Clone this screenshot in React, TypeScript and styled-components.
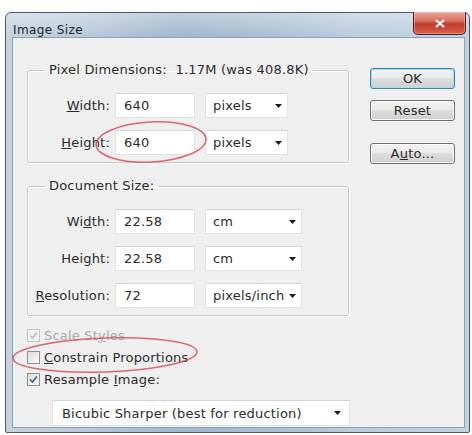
import styled, { createGlobalStyle } from 'styled-components';

const GlobalStyle = createGlobalStyle`
  html, body {
    margin: 0;
    padding: 0;
    background: #ffffff;
  }
  body {
    font-family: "DejaVu Sans", "Liberation Sans", sans-serif;
    font-size: 13px;
    letter-spacing: 0.2px;
    color: #2b2b2b;
  }
`;

type SelectProps = { width: number; value: string };

function Select({ width, value }: SelectProps) {
  return (
    <SelectBox $w={width}>
      <span>{value}</span>
      <svg width="7" height="4" viewBox="0 0 7 4">
        <path d="M0 0 H7 L3.5 4 Z" fill="#1a1a1a" />
      </svg>
    </SelectBox>
  );
}

type CheckProps = { label: React.ReactNode; checked?: boolean; disabled?: boolean };

function Check({ label, checked, disabled }: CheckProps) {
  return (
    <CheckRow $disabled={disabled}>
      <Box $disabled={disabled}>
        {checked && (
          <svg width="9" height="9" viewBox="0 0 9 9">
            <path
              d="M1 4.5 L3.5 7 L8 1.5"
              fill="none"
              stroke={disabled ? '#b8b8b8' : '#3a5a8c'}
              strokeWidth="1.6"
            />
          </svg>
        )}
      </Box>
      <span>{label}</span>
    </CheckRow>
  );
}

export default function App() {
  return (
    <>
      <GlobalStyle />
      <Page>
        <Window>
          <TitleBar>
            <Title>Image Size</Title>
            <CloseButton>
              <svg width="10" height="9" viewBox="0 0 10 9">
                <path d="M1 1 L9 8 M9 1 L1 8" stroke="#ffffff" strokeWidth="2.2" />
              </svg>
            </CloseButton>
          </TitleBar>
          <Client>
            <LeftColumn>
              <Group>
                <Legend>Pixel Dimensions:  1.17M (was 408.8K)</Legend>
                <FieldRow>
                  <Label><u>W</u>idth:</Label>
                  <Input>640</Input>
                  <Select width={83} value="pixels" />
                </FieldRow>
                <FieldRow>
                  <Label><u>H</u>eight:</Label>
                  <Input>640</Input>
                  <Select width={83} value="pixels" />
                </FieldRow>
              </Group>

              <Group $spaced>
                <Legend>Document Size:</Legend>
                <FieldRow>
                  <Label>Wi<u>d</u>th:</Label>
                  <Input>22.58</Input>
                  <Select width={97} value="cm" />
                </FieldRow>
                <FieldRow>
                  <Label>Hei<u>g</u>ht:</Label>
                  <Input>22.58</Input>
                  <Select width={97} value="cm" />
                </FieldRow>
                <FieldRow>
                  <Label><u>R</u>esolution:</Label>
                  <Input>72</Input>
                  <Select width={97} value="pixels/inch" />
                </FieldRow>
              </Group>

              <Checks>
                <Check label={<>Scale St<u>y</u>les</>} checked disabled />
                <Check label={<><u>C</u>onstrain Proportions</>} />
                <Check label={<>Resample <u>I</u>mage:</>} checked />
              </Checks>

              <ResampleSelect>
                <span>Bicubic Sharper (best for reduction)</span>
                <svg width="7" height="4" viewBox="0 0 7 4">
                  <path d="M0 0 H7 L3.5 4 Z" fill="#1a1a1a" />
                </svg>
              </ResampleSelect>
            </LeftColumn>

            <RightColumn>
              <ButtonGroup>
                <Button $default>OK</Button>
                <Button>Reset</Button>
              </ButtonGroup>
              <Button>A<u>u</u>to...</Button>
            </RightColumn>
          </Client>
        </Window>

        {/* hand-drawn red marks over the dialog */}
        <Marks width="472" height="435" viewBox="0 0 472 435">
          <ellipse cx="151" cy="142" rx="55" ry="20" transform="rotate(-3 151 142)" />
          <ellipse cx="105" cy="355" rx="92" ry="17" transform="rotate(-2 105 355)" />
        </Marks>
      </Page>
    </>
  );
}

const Page = styled.div`
  position: relative;
  width: 472px;
  height: 435px;
  box-sizing: border-box;
  padding: 12px 2px 2px 5px;
`;

const Window = styled.div`
  display: flex;
  flex-direction: column;
  height: 100%;
  box-sizing: border-box;
  border: 1px solid #4b5968;
  border-radius: 6px 6px 2px 2px;
  background:
    linear-gradient(180deg, rgba(255, 255, 255, 0.35) 0px, rgba(255, 255, 255, 0) 24px),
    linear-gradient(90deg, #c6d2dd 0%, #b7c8d9 18%, #9fb6cd 38%, #a9bed2 55%, #b9cbdc 75%, #c2d2e1 100%);
`;

const TitleBar = styled.div`
  display: flex;
  justify-content: space-between;
  align-items: flex-start;
  height: 24px;
  padding-left: 7px;
`;

const Title = styled.div`
  padding-top: 10px;
  font-size: 12px;
  letter-spacing: 0.4px;
  color: #1c2530;
`;

const CloseButton = styled.div`
  display: flex;
  align-items: center;
  justify-content: center;
  width: 53px;
  height: 23px;
  margin-top: -1px;
  margin-right: 3px;
  box-sizing: border-box;
  border: 1px solid #4a2020;
  border-top: none;
  border-radius: 0 0 5px 5px;
  background: linear-gradient(180deg, #e9a99b 0%, #d9705f 40%, #c23b28 55%, #d5624d 100%);
  box-shadow: inset 0 0 0 1px rgba(255, 200, 190, 0.45);
`;

const Client = styled.div`
  flex: 1;
  display: flex;
  gap: 21px;
  margin: 0 4px 4px 6px;
  padding: 0 10px 0 14px;
  border: 1px solid #8ea1b4;
  background: #efefef;
`;

const LeftColumn = styled.div`
  display: flex;
  flex-direction: column;
  width: 322px;
  padding-top: 25px;
`;

const Group = styled.fieldset<{ $spaced?: boolean }>`
  display: flex;
  flex-direction: column;
  gap: 12px;
  margin: ${(p) => (p.$spaced ? '16px' : '0')} 0 0 0;
  padding: 16px 8px 7px 6px;
  border: 1px solid #c9c9c9;
  border-radius: 3px;
  box-shadow: inset 1px 1px 0 #ffffff, 1px 1px 0 #ffffff;
`;

const Legend = styled.legend`
  margin-left: 11px;
  padding: 0 4px;
  line-height: 14px;
  white-space: pre;
  color: #2b2b2b;
`;

const FieldRow = styled.div`
  display: flex;
  align-items: center;
  height: 25px;
`;

const Label = styled.div`
  width: 76px;
  margin-right: 5px;
  text-align: right;
  white-space: nowrap;
`;

const Input = styled.div`
  width: 80px;
  height: 25px;
  box-sizing: border-box;
  margin-right: 10px;
  padding: 0 8px;
  display: flex;
  align-items: center;
  background: #ffffff;
  border: 1px solid #e2e2e2;
  border-top-color: #d4d4d4;
`;

const SelectBox = styled.div<{ $w: number }>`
  width: ${(p) => p.$w}px;
  height: 25px;
  box-sizing: border-box;
  padding: 0 5px 0 7px;
  display: flex;
  align-items: center;
  justify-content: space-between;
  background: #ffffff;
  border: 1px solid #e2e2e2;
  border-top-color: #d4d4d4;
  white-space: nowrap;
`;

const Checks = styled.div`
  display: flex;
  flex-direction: column;
  margin-top: 8px;
`;

const CheckRow = styled.div<{ $disabled?: boolean }>`
  display: flex;
  align-items: center;
  gap: 4px;
  height: 22px;
  color: ${(p) => (p.$disabled ? '#a9a9a9' : '#2b2b2b')};
`;

const Box = styled.span<{ $disabled?: boolean }>`
  display: flex;
  align-items: center;
  justify-content: center;
  width: 13px;
  height: 13px;
  box-sizing: border-box;
  border: 1px solid ${(p) => (p.$disabled ? '#c4c4c4' : '#8e8f8f')};
  background: ${(p) =>
    p.$disabled ? '#f4f4f4' : 'linear-gradient(135deg, #dcdcdc 0%, #fbfbfb 100%)'};
`;

const ResampleSelect = styled(SelectBox).attrs({ $w: 298 })`
  margin: 10px 0 0 25px;
  height: 26px;
  padding: 0 8px 0 9px;
`;

const RightColumn = styled.div`
  display: flex;
  flex-direction: column;
  gap: 22px;
  padding-top: 30px;
`;

const ButtonGroup = styled.div`
  display: flex;
  flex-direction: column;
  gap: 11px;
`;

const Button = styled.div<{ $default?: boolean }>`
  display: flex;
  align-items: center;
  justify-content: center;
  width: 85px;
  height: 21px;
  box-sizing: border-box;
  border: 1px solid ${(p) => (p.$default ? '#3c7fb1' : '#707070')};
  border-radius: 3px;
  background: linear-gradient(180deg, #f2f2f2 0%, #ebebeb 45%, #dddddd 50%, #cfcfcf 100%);
  box-shadow: inset 0 0 0 1px ${(p) => (p.$default ? '#a6dcf2' : '#fcfcfc')};
  color: #2b2b2b;
`;

const Marks = styled.svg`
  position: absolute;
  left: 0;
  top: 0;
  pointer-events: none;

  ellipse {
    fill: none;
    stroke: #d5505c;
    stroke-width: 1.6;
    opacity: 0.85;
  }
`;
